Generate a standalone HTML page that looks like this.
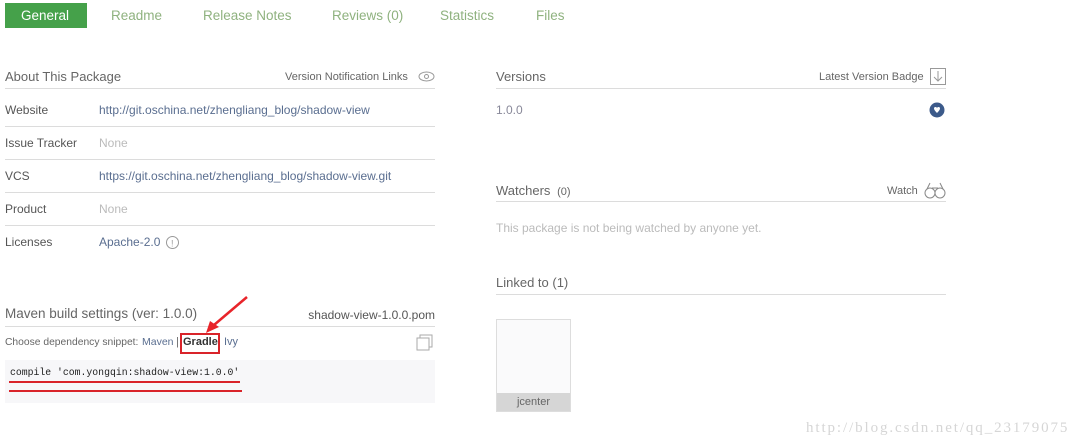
<!DOCTYPE html>
<html><head><meta charset="utf-8"><style>
body{margin:0;width:1080px;height:445px;background:#fff;font-family:"Liberation Sans",sans-serif;position:relative;overflow:hidden;color:#555}
.a{position:absolute;white-space:nowrap}
.tab{font-size:13.5px;color:#8fb27f;top:8px}
.line{position:absolute;height:1px;background:#dcdcdc}
.h{font-size:13px;color:#666}
.l{font-size:12px;color:#555}
.v{font-size:12px;color:#5a6e90}
.n{font-size:12px;color:#bbb}
.s{font-size:11px;color:#666}
</style></head><body>
<div class="a" style="left:5px;top:3px;width:82px;height:25px;background:#45a14a"></div>
<div class="a tab" style="left:21px;color:#fff">General</div>
<div class="a tab" style="left:111px">Readme</div>
<div class="a tab" style="left:203px">Release Notes</div>
<div class="a tab" style="left:332px">Reviews (0)</div>
<div class="a tab" style="left:440px">Statistics</div>
<div class="a tab" style="left:536px">Files</div>

<div class="a h" style="left:5px;top:69px">About This Package</div>
<div class="a s" style="left:285px;top:71px">Version Notification Links</div>
<svg class="a" style="left:418px;top:71px" width="17" height="11"><ellipse cx="8.5" cy="5.5" rx="7.5" ry="4.5" fill="none" stroke="#999"/><circle cx="8.5" cy="5.5" r="2" fill="none" stroke="#999"/></svg>
<div class="line" style="left:5px;top:88px;width:430px"></div>
<div class="a l" style="left:5px;top:103px">Website</div><div class="a v" style="left:99px;top:103px">http://git.oschina.net/zhengliang_blog/shadow-view</div>
<div class="line" style="left:5px;top:126px;width:430px"></div>
<div class="a l" style="left:5px;top:136px">Issue Tracker</div><div class="a n" style="left:99px;top:136px">None</div>
<div class="line" style="left:5px;top:159px;width:430px"></div>
<div class="a l" style="left:5px;top:169px">VCS</div><div class="a v" style="left:99px;top:169px">https://git.oschina.net/zhengliang_blog/shadow-view.git</div>
<div class="line" style="left:5px;top:192px;width:430px"></div>
<div class="a l" style="left:5px;top:202px">Product</div><div class="a n" style="left:99px;top:202px">None</div>
<div class="line" style="left:5px;top:225px;width:430px"></div>
<div class="a l" style="left:5px;top:235px">Licenses</div><div class="a v" style="left:99px;top:235px">Apache-2.0</div>
<svg class="a" style="left:165px;top:235px" width="15" height="15"><circle cx="7.5" cy="7.5" r="6" fill="none" stroke="#999"/><text x="6" y="11.5" font-size="9" fill="#999" font-family="Liberation Sans">!</text></svg>

<div class="a h" style="left:5px;top:306px;font-size:13.5px">Maven build settings (ver: 1.0.0)</div>
<div class="a l" style="right:645px;top:308px">shadow-view-1.0.0.pom</div>
<div class="line" style="left:5px;top:326px;width:430px"></div>
<div class="a s" style="left:5px;top:337px;font-size:10.3px">Choose dependency snippet:</div>
<div class="a s" style="left:142px;top:336px;color:#5a6e90;font-size:10.5px">Maven</div>
<div class="a s" style="left:176px;top:336px">|</div>
<div class="a s" style="left:183px;top:336px;color:#333;font-weight:bold">Gradle</div>
<div class="a s" style="left:224px;top:336px;color:#5a6e90">Ivy</div>
<div class="a" style="left:180px;top:333px;width:36px;height:17px;border:2px solid #d9242a"></div>
<svg class="a" style="left:200px;top:295px" width="50" height="40"><line x1="47" y1="2" x2="14" y2="30" stroke="#e8242a" stroke-width="2.5"/><polygon points="6,38 10,26 19,32" fill="#e8242a"/></svg>
<svg class="a" style="left:416px;top:334px" width="18" height="18"><rect x="4" y="1" width="12" height="12" fill="#fff" stroke="#aaa"/><rect x="1" y="4" width="12" height="12" fill="#fff" stroke="#aaa"/></svg>
<div class="a" style="left:5px;top:360px;width:430px;height:43px;background:#f7f7f9"></div>
<div class="a" style="left:10px;top:367px;font-family:'Liberation Mono',monospace;font-size:9.8px;color:#222">compile 'com.yongqin:shadow-view:1.0.0'</div>
<div class="a" style="left:9px;top:381px;width:231px;height:2px;background:#d9242a"></div>
<div class="a" style="left:9px;top:390px;width:233px;height:2px;background:#d9242a"></div>

<div class="a h" style="left:496px;top:69px">Versions</div>
<div class="a s" style="left:819px;top:71px">Latest Version Badge</div>
<svg class="a" style="left:930px;top:68px" width="16" height="18"><rect x="0.5" y="0.5" width="15" height="16" fill="none" stroke="#999"/><path d="M8 3V13M4 9L8 13L12 9" fill="none" stroke="#999"/></svg>
<div class="line" style="left:496px;top:88px;width:450px"></div>
<div class="a n" style="left:496px;top:103px;color:#889">1.0.0</div>
<svg class="a" style="left:929px;top:102px" width="16" height="16"><circle cx="8" cy="8" r="7.5" fill="#3c5a8a"/><path d="M5 6.5Q5 5 6.5 5Q8 5 8 6.5Q8 5 9.5 5Q11 5 11 6.5Q11 8 8 11Q5 8 5 6.5Z" fill="#fff"/></svg>

<div class="a h" style="left:496px;top:183px">Watchers <span style="font-size:11px">&nbsp;(0)</span></div>
<div class="a s" style="left:887px;top:185px">Watch</div>
<svg class="a" style="left:924px;top:181px" width="22" height="18"><circle cx="6" cy="12" r="5" fill="none" stroke="#888"/><circle cx="16" cy="12" r="5" fill="none" stroke="#888"/><path d="M3 8L6 2M19 8L16 2M8 7H14" fill="none" stroke="#888"/></svg>
<div class="line" style="left:496px;top:201px;width:450px"></div>
<div class="a n" style="left:496px;top:221px">This package is not being watched by anyone yet.</div>

<div class="a h" style="left:496px;top:275px">Linked to (1)</div>
<div class="line" style="left:496px;top:294px;width:450px"></div>
<div class="a" style="left:496px;top:319px;width:73px;height:91px;border:1px solid #ddd;background:#fafafb"></div>
<div class="a" style="left:497px;top:393px;width:73px;height:18px;background:#d6d6d6;font-size:11px;color:#666;text-align:center;line-height:18px">jcenter</div>
<div class="a" style="left:806px;top:420px;font-family:'Liberation Serif',serif;font-size:15px;letter-spacing:1.9px;color:#d6d6d6">http://blog.csdn.net/qq_23179075</div>
</body></html>
